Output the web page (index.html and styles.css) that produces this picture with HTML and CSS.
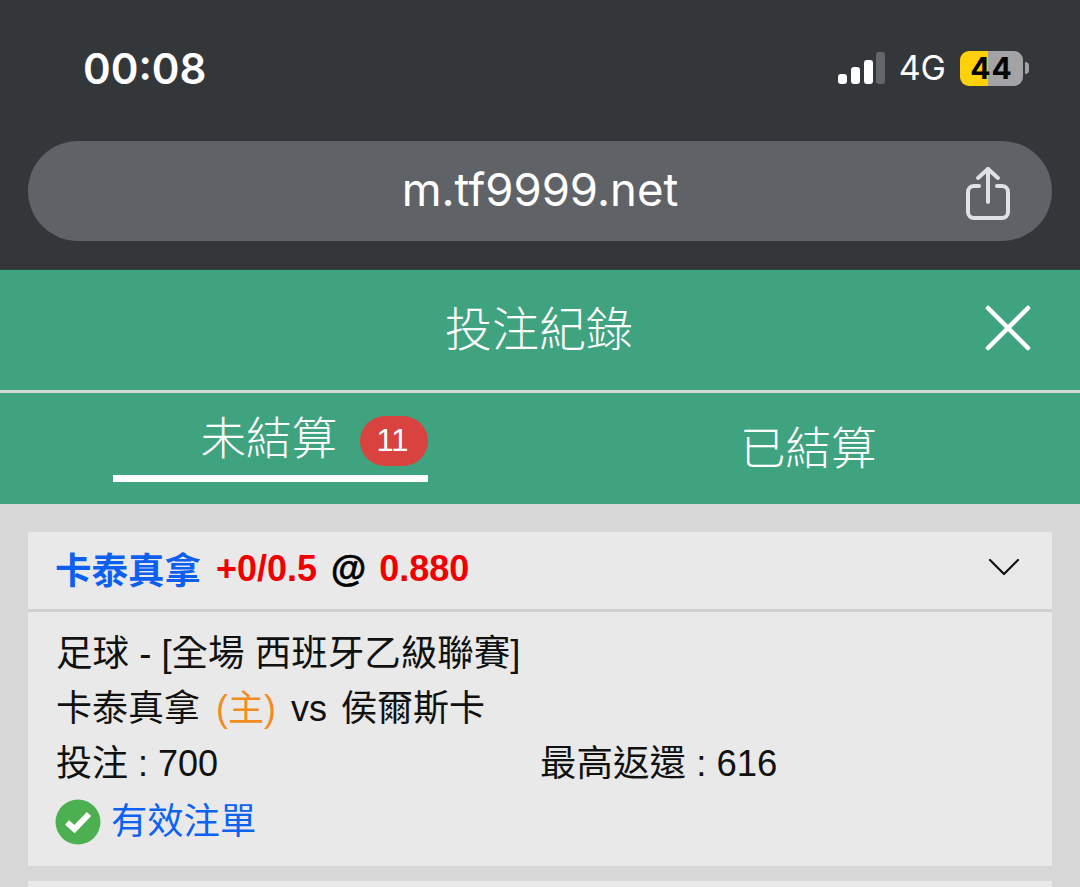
FILE: index.html
```html
<!DOCTYPE html>
<html lang="zh-Hant">
<head>
<meta charset="utf-8">
<title>投注紀錄</title>
<link rel="stylesheet" href="styles.css">
</head>
<body>
<div class="browser">
  <div class="status">
    <span class="time">00:08</span>
    <div class="status-right">
      <svg class="signal" width="48" height="32" viewBox="0 0 48 32"><rect x="1" y="22" width="9" height="10" rx="3" fill="#fff"/><rect x="14" y="15" width="9" height="17" rx="3" fill="#fff"/><rect x="27" y="8" width="9" height="24" rx="3" fill="#fff"/><rect x="39" y="0" width="9" height="32" rx="3" fill="#63676b"/></svg>
      <span class="net">4G</span>
      <div class="battery"><div class="batt-body"><span class="batt-num">44</span></div><span class="batt-cap"></span></div>
    </div>
  </div>
  <div class="urlbar">
    <span class="url">m.tf9999.net</span>
    <svg class="share" width="46" height="56" viewBox="0 0 46 56" fill="none" stroke="#dfe1e4" stroke-width="4" stroke-linecap="round" stroke-linejoin="round"><path d="M14 20H9a6 6 0 0 0-6 6v20a6 6 0 0 0 6 6h28a6 6 0 0 0 6-6V26a6 6 0 0 0-6-6h-5"/><path d="M23 36V3"/><path d="M13 12l10-9 10 9"/></svg>
  </div>
</div>
<div class="app">
  <header class="title-bar">
    <h1 class="title">投注紀錄</h1>
    <svg class="close" width="46" height="46" viewBox="0 0 46 46" stroke="#fff" stroke-width="4.5" stroke-linecap="round"><path d="M3 3l40 40M43 3L3 43"/></svg>
  </header>
  <nav class="tabs">
    <div class="tab tab-active"><span class="tab-label">未結算</span><span class="badge">11</span></div>
    <div class="tab tab-other"><span class="tab-label">已結算</span></div>
  </nav>
  <main class="list">
    <section class="card">
      <div class="card-head">
        <div class="pick"><span class="team">卡泰真拿</span><span class="red">+0/0.5</span><span class="at">@</span><span class="red">0.880</span></div>
        <svg class="chev" width="32" height="18" viewBox="0 0 32 18" fill="none" stroke="#111" stroke-width="2.2" stroke-linecap="round" stroke-linejoin="round"><path d="M2 2l14 14L30 2"/></svg>
      </div>
      <div class="card-body">
        <div class="line line-wide">足球 - [全場 西班牙乙級聯賽]</div>
        <div class="line">卡泰真拿<span class="home">(主)</span><span class="vs">vs</span>侯爾斯卡</div>
        <div class="line cols"><span class="col">投注 : 700</span><span class="col col-wide">最高返還 : 616</span></div>
        <div class="line valid">
          <svg class="check" width="46" height="46" viewBox="0 0 46 46"><circle cx="23" cy="23" r="22.5" fill="#4caf50"/><path d="M12 23.5l7.5 6.5L34 15" fill="none" stroke="#fff" stroke-width="6"/></svg>
          <span class="valid-text">有效注單</span>
        </div>
      </div>
    </section>
    <section class="card card-next"></section>
  </main>
</div>
</body>
</html>
```
FILE: styles.css
```css
* { box-sizing: border-box; }
html, body { margin: 0; padding: 0; }
body {
  width: 1080px;
  height: 887px;
  overflow: hidden;
  background: #d8d8d8;
  font-family: "Liberation Sans", "Noto Sans CJK TC", sans-serif;
}
.browser {
  height: 269px;
  background: #34373a;
  padding: 0 28px;
}
.status {
  height: 141px;
  display: flex;
  align-items: flex-start;
  justify-content: space-between;
  padding: 44px 22px 0 55px;
}
.time {
  font-family: Inter, sans-serif;
  font-weight: 600;
  font-size: 42px;
  line-height: 50px;
  color: #fff;
}
.status-right {
  display: flex;
  align-items: center;
  margin-top: 6px;
}
.signal { margin-right: 14px; margin-top: -1px; }
.net {
  font-family: Inter, sans-serif;
  font-size: 34px;
  line-height: 36px;
  color: #fff;
  margin-right: 14px;
}
.battery { display: flex; align-items: center; margin-right: 1px; }
.batt-body {
  width: 63px;
  height: 35px;
  border-radius: 9px;
  background: linear-gradient(to right, #fdd10a 0 45%, #a3a3a5 45% 100%);
  display: flex;
  align-items: center;
  justify-content: center;
}
.batt-num {
  font-family: Inter, sans-serif;
  font-weight: 700;
  font-size: 30px;
  color: #000;
  letter-spacing: 1px;
}
.batt-cap {
  width: 4px;
  height: 12px;
  margin-left: 2px;
  border-radius: 0 4px 4px 0;
  background: #a3a3a5;
}
.urlbar {
  height: 100px;
  border-radius: 50px;
  background: #5f6367;
  display: flex;
  align-items: center;
  justify-content: center;
  position: relative;
  padding-bottom: 4px;
}
.url {
  font-family: Inter, sans-serif;
  font-size: 45.5px;
  color: #fff;
}
.share { position: absolute; right: 41px; top: 25px; }
.title-bar {
  height: 124px;
  background: #3fa380;
  border-top: 1px solid #24493d;
  border-bottom: 3px solid #cfdcd7;
  display: flex;
  align-items: center;
  justify-content: center;
  padding-bottom: 9px;
  position: relative;
}
.title {
  margin: 0 0 0 -2px;
  font-weight: 300;
  font-size: 47px;
  color: #fff;
}
.close { position: absolute; right: 49px; top: 35px; }
.tabs {
  height: 111px;
  background: #3fa380;
  display: flex;
  padding: 0 0 0 113px;
}
.tab { color: #fff; font-size: 45.5px; line-height: 60px; font-weight: 300; }
.tab-active {
  width: 315px;
  height: 89px;
  border-bottom: 7px solid #fff;
  display: flex;
  align-items: flex-start;
  justify-content: flex-end;
  padding-top: 17px;
}
.tab-other { margin-left: 312px; padding-top: 27px; }
.badge {
  margin-left: 23px;
  margin-top: 6px;
  width: 68px;
  height: 50px;
  border-radius: 25px;
  background: #d8433f;
  font-size: 31px;
  line-height: 50px;
  text-align: center;
  padding-right: 3px;
}
.list { padding: 28px 28px 0; }
.card { background: #e9e9e9; }
.card-head {
  height: 80px;
  border-bottom: 3px solid #d0d0d0;
  display: flex;
  align-items: center;
  justify-content: space-between;
  padding: 0 32px 4px 28px;
}
.pick {
  display: flex;
  align-items: center;
  gap: 15px;
  font-size: 36px;
  font-weight: 700;
}
.team { color: #0d5ff0; font-size: 36.5px; margin-left: -1px; }
.red { color: #f00000; }
.at { color: #000; margin: 0 -2px 0 -1px; -webkit-text-stroke: 0.6px #000; }
.chev { margin-top: -4px; }
.card-body { height: 254px; padding: 14px 28px 0; }
.line { height: 55px; font-size: 36px; line-height: 55px; color: #111; }
.line-wide { font-size: 36.5px; }
.home { color: #f28c1e; margin-left: 16px; }
.vs { margin: 0 14px 0 15px; }
.cols { display: flex; }
.col { width: 484px; }
.col-wide { font-size: 36.5px; }
.valid { display: flex; align-items: center; margin-top: 3px; }
.check { margin-left: -1px; margin-right: 10px; }
.valid-text { color: #0d63f0; font-size: 36.3px; }
.card-next { margin-top: 15px; height: 40px; }
```
